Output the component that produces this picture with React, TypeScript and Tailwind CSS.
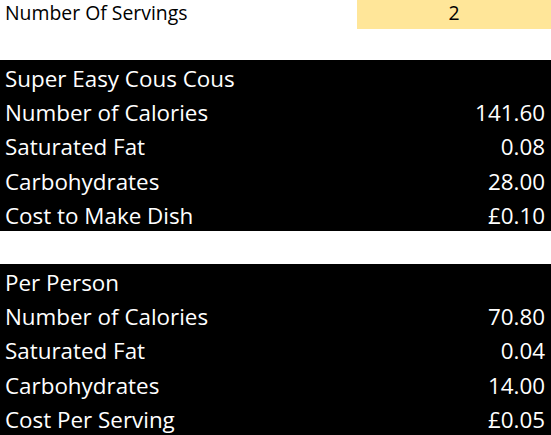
import React from "react";

const font = { fontFamily: '"Open Sans", "Noto Sans", sans-serif' };

function Block({ title, rows }: { title: string; rows: [string, string][] }) {
  return (
    <div className="flex h-[171px] flex-col bg-black text-white">
      <div className="flex flex-1 pl-[5px] pr-[6px] pt-[4px] text-[22.4px] leading-[30px]">
        <span>{title}</span>
      </div>
      {rows.map(([label, value]) => (
        <div
          key={label}
          className="flex flex-1 justify-between pl-[5px] pr-[6px] pt-[4px] text-[22.4px] leading-[30px]"
        >
          <span>{label}</span>
          <span>{value}</span>
        </div>
      ))}
    </div>
  );
}

export default function App() {
  return (
    <div className="h-[435px] w-[551px] overflow-hidden bg-white" style={font}>
      <div className="flex h-[29px]">
        <div className="w-[357px] pl-[5px] text-[19.4px] leading-[26px] text-black">
          Number Of Servings
        </div>
        <div className="flex-1 bg-[#ffe699] text-center text-[19.4px] leading-[26px] text-black">
          2
        </div>
      </div>
      <div className="h-[31px]" />
      <Block
        title="Super Easy Cous Cous"
        rows={[
          ["Number of Calories", "141.60"],
          ["Saturated Fat", "0.08"],
          ["Carbohydrates", "28.00"],
          ["Cost to Make Dish", "£0.10"],
        ]}
      />
      <div className="h-[33px]" />
      <Block
        title="Per Person"
        rows={[
          ["Number of Calories", "70.80"],
          ["Saturated Fat", "0.04"],
          ["Carbohydrates", "14.00"],
          ["Cost Per Serving", "£0.05"],
        ]}
      />
    </div>
  );
}
